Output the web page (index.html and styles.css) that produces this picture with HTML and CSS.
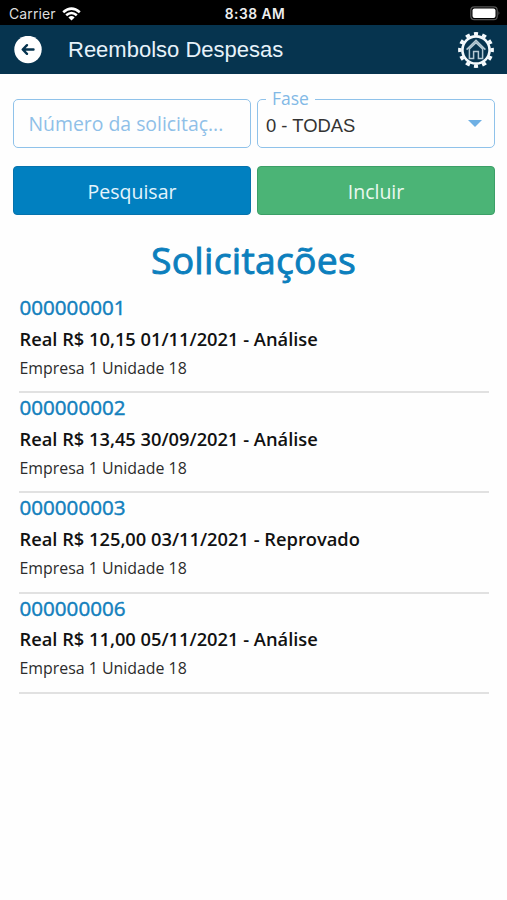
FILE: index.html
```html
<!DOCTYPE html>
<html lang="pt-BR">
<head>
<meta charset="utf-8">
<title>Reembolso Despesas</title>
<link rel="stylesheet" href="styles.css">
</head>
<body>
<div class="status">
  <div class="carrier"><span>Carrier</span>
    <svg width="19" height="14" viewBox="0 0 19 14" fill="none" stroke="#fff" stroke-width="2.6"><path d="M1.2 5.2Q9.5-2 17.8 5.2M4.2 8.3Q9.5 3.7 14.8 8.3"/><path d="M6.4 10.4Q9.5 7.7 12.6 10.4L9.5 13.6Z" fill="#fff" stroke="none"/></svg>
  </div>
  <div class="clock">8:38 AM</div>
  <svg class="battery" width="31" height="15" viewBox="0 0 31 15"><rect x=".8" y=".8" width="26.4" height="12.9" rx="3.5" fill="none" stroke="#555" stroke-width="1.2"/><rect x="2.5" y="2.5" width="23" height="9.6" rx="2" fill="#fff"/><path d="M28.6 5q1.8 2.2 0 4.6z" fill="#777"/></svg>
</div>
<header class="bar">
  <svg class="back" width="28" height="28" viewBox="0 0 28 28"><circle cx="14" cy="13.5" r="13.7" fill="#fff"/><path d="M19.5 13.5H9M13 9.2L8.7 13.5l4.3 4.3" fill="none" stroke="#06344f" stroke-width="2.4" stroke-linecap="round" stroke-linejoin="round"/></svg>
  <h1>Reembolso Despesas</h1>
  <svg class="gear" width="36" height="36" viewBox="0 0 36 36" fill="none"><circle cx="18" cy="18" r="13.6" stroke="#f4f9fc" stroke-width="2.6"/><circle cx="18" cy="18" r="16.2" stroke="#f4f9fc" stroke-width="3.4" pathLength="120" stroke-dasharray="5 5" stroke-dashoffset="2.5"/><path d="M8.6 17.6L18 8.2l9.4 9.4M11.4 17v9.4h4.2v-7h4.8v7h4.2V17L18 10.6z" stroke="#b4c9d4" stroke-width="1.5"/></svg>
</header>
<main>
  <form class="filters">
    <div class="field number">Número da solicitaç...</div>
    <div class="field phase"><span class="label">Fase</span><span>0 - TODAS</span><i class="caret"></i></div>
    <button type="button" class="search">Pesquisar</button>
    <button type="button" class="add">Incluir</button>
  </form>
  <h2>Solicitações</h2>
  <ul class="list">
    <li><b>000000001</b><strong>Real R$ 10,15 01/11/2021 - Análise</strong><span>Empresa 1 Unidade 18</span></li>
    <li><b>000000002</b><strong>Real R$ 13,45 30/09/2021 - Análise</strong><span>Empresa 1 Unidade 18</span></li>
    <li><b>000000003</b><strong>Real R$ 125,00 03/11/2021 - Reprovado</strong><span>Empresa 1 Unidade 18</span></li>
    <li><b>000000006</b><strong>Real R$ 11,00 05/11/2021 - Análise</strong><span>Empresa 1 Unidade 18</span></li>
  </ul>
</main>
</body>
</html>
```
FILE: styles.css
```css
* { box-sizing: border-box; }
body { margin: 0; min-height: 900px; background: #fefefe; font-family: "Open Sans", sans-serif; }
.status { height: 25px; padding: 2px 6px 0 9px; background: #000; color: #fff; display: grid; grid-template-columns: 1fr auto 1fr; align-items: center; font-family: Inter, sans-serif; font-size: 14px; }
.carrier { display: flex; align-items: center; gap: 6px; color: #ddd; letter-spacing: .1px; }
.clock { font-size: 13.8px; font-weight: 600; color: #eee; letter-spacing: .5px; }
.battery { justify-self: end; }
.bar { height: 49px; padding: 0 13px 0 14px; background: #06344f; display: flex; align-items: center; }
.bar h1 { margin: 0 auto 0 26px; font: 400 22px/28px "Liberation Sans", sans-serif; color: #e6f2fa; white-space: nowrap; }
.filters { padding: 24.5px 12px 0 13px; display: grid; grid-template-columns: 1fr 1fr; column-gap: 6px; row-gap: 18px; }
.field { height: 49px; border: 1.5px solid #8fc2ea; border-radius: 5px; display: flex; align-items: center; position: relative; white-space: nowrap; }
.number { padding-left: 14.5px; font-size: 19.4px; color: #8fc0e8; }
.phase { padding: 5px 12px 0 8px; justify-content: space-between; font: 18.4px "Liberation Sans", sans-serif; color: #333; }
.label { position: absolute; left: 8px; top: -14px; padding: 0 6px; background: #fefefe; font: 17.5px/24px "Open Sans", sans-serif; color: #82b9e6; }
.caret { border: 7.5px solid transparent; border-top-color: #6fb0e4; border-bottom: 0; margin-top: -5px; }
.filters button { height: 49px; padding: 2px 0 0; border: 1px solid #0673ad; border-radius: 4px; background: #0180c0; color: #e4f4fc; font: 19.5px "Open Sans", sans-serif; }
.filters .add { background: #4bb476; border-color: #3c9f67; color: #eaf8ee; }
h2 { margin: 17px 0 0; font-size: 37.3px; line-height: 56px; font-weight: 400; letter-spacing: .25px; -webkit-text-stroke: .9px #0c7fbd; color: #0c7fbd; text-align: center; }
.list { list-style: none; margin: 4.5px 18px 0 19px; padding: 0; }
.list li { height: 100.2px; border-bottom: 2px solid #e1e1e1; display: flex; flex-direction: column; white-space: nowrap; padding-left: .5px; }
.list li:first-child { height: 101.2px; }
.list li:first-child, .list li { padding-top: 0; }
.list b { font-size: 20.6px; line-height: 30px; font-weight: 400; -webkit-text-stroke: .45px #1380bd; color: #1380bd; }
.list li:first-child b { line-height: 31px; }
.list li + li b { line-height: 29.6px; }
.list strong { font-size: 18.3px; line-height: 32px; font-weight: 600; color: #111; }
.list span { font-size: 15.9px; line-height: 26px; color: #2c2c2c; }
```
